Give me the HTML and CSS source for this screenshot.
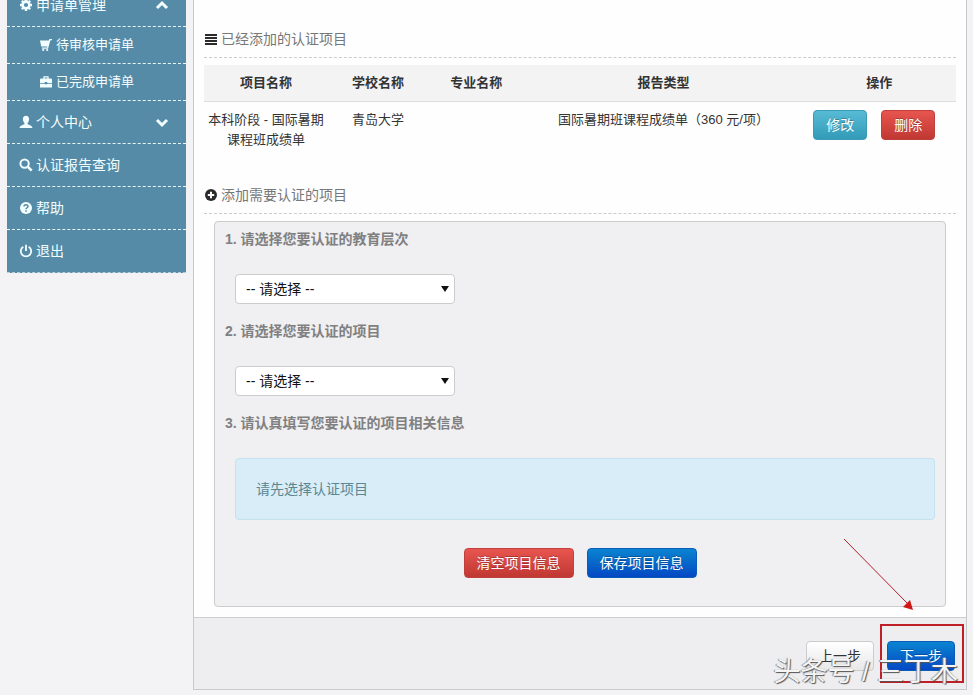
FILE: index.html
```html
<!DOCTYPE html>
<html lang="zh-CN">
<head>
    <meta charset="UTF-8">
    <title>认证申请</title>
    <link rel="stylesheet" href="styles.css">
</head>
<body>
    <nav class="sidebar">
        <a href="#" class="item">
            <svg class="icon" viewBox="0 0 14 14"><circle cx="7" cy="7" r="3.4" fill="none" stroke="currentColor" stroke-width="2.6"/><path d="M7 1v2M7 11v2M1 7h2M11 7h2M2.8 2.8l1.4 1.4M9.8 9.8l1.4 1.4M11.2 2.8L9.8 4.2M4.2 9.8l-1.4 1.4" stroke="currentColor" stroke-width="2.4"/></svg>
            <span>申请单管理</span>
            <svg class="arrow" viewBox="0 0 14 14"><path d="M2 10l5-5 5 5" fill="none" stroke="currentColor" stroke-width="3"/></svg>
        </a>
        <a href="#" class="item sub">
            <svg class="icon" viewBox="0 0 14 14"><path d="M13 1h-2.600l-.5 1.600H1L2.200 8.400h6.200l-.3 1H3v1.300h6L11.400 2.300H13z" fill="currentColor"/><circle cx="4.200" cy="12" r="1.100" fill="currentColor"/><circle cx="8.200" cy="12" r="1.100" fill="currentColor"/></svg>
            <span>待审核申请单</span>
        </a>
        <a href="#" class="item sub">
            <svg class="icon" viewBox="0 0 14 14"><path d="M5 4V1.800h4V4" fill="none" stroke="currentColor" stroke-width="1.300"/><path d="M2 3.500h10q1 0 1 1V8H8.300V7H5.700v1H1V4.500q0-1 1-1zM1 8.700h4.700v.6h2.600v-.6H13v3.800H1z" fill="currentColor"/></svg>
            <span>已完成申请单</span>
        </a>
        <a href="#" class="item">
            <svg class="icon" viewBox="0 0 14 14"><path d="M7 .8c2 0 3.100 1.300 3.100 3.200C10.100 5.800 9.400 7 8.600 7.900v1.300c1.800.900 4.600 1.200 4.900 3.800H.5c.3-2.600 3.100-2.900 4.900-3.800V7.900C4.600 7 3.900 5.800 3.900 4 3.900 2.100 5 .8 7 .8z" fill="currentColor"/></svg>
            <span>个人中心</span>
            <svg class="arrow" viewBox="0 0 14 14"><path d="M2 5l5 5 5-5" fill="none" stroke="currentColor" stroke-width="3"/></svg>
        </a>
        <a href="#" class="item">
            <svg class="icon" viewBox="0 0 14 14"><circle cx="5.600" cy="5.600" r="4.200" fill="none" stroke="currentColor" stroke-width="2"/><path d="M8.700 8.700l4 4" stroke="currentColor" stroke-width="2.600"/></svg>
            <span>认证报告查询</span>
        </a>
        <a href="#" class="item">
            <svg class="icon" viewBox="0 0 14 14"><circle cx="7" cy="7" r="6" fill="currentColor"/><path d="M5 5.500C5 3.200 9 3.200 9 5.400 9 6.800 7 6.700 7 8.300M7 9.300v1.500" fill="none" stroke="#558ba6" stroke-width="1.500"/></svg>
            <span>帮助</span>
        </a>
        <a href="#" class="item">
            <svg class="icon" viewBox="0 0 14 14"><path d="M4.300 2.800a5.200 5.200 0 1 0 5.400 0M7 .8V7" fill="none" stroke="currentColor" stroke-width="1.800"/></svg>
            <span>退出</span>
        </a>
    </nav>

    <main class="main">
        <div class="content">
            <h2 class="title">
                <svg class="icon" viewBox="0 0 14 14"><path d="M1 3h12M1 6h12M1 9h12M1 12h12" stroke="currentColor" stroke-width="2"/></svg>
                <span>已经添加的认证项目</span>
            </h2>
            <table class="projects">
                <thead>
                    <tr>
                        <th class="col-name">项目名称</th>
                        <th class="col-school">学校名称</th>
                        <th class="col-major">专业名称</th>
                        <th class="col-type">报告类型</th>
                        <th class="col-action">操作</th>
                    </tr>
                </thead>
                <tbody>
                    <tr>
                        <td>本科阶段 - 国际暑期课程班成绩单</td>
                        <td>青岛大学</td>
                        <td></td>
                        <td>国际暑期班课程成绩单（360 元/项）</td>
                        <td>
                            <div class="actions">
                                <button type="button" class="btn btn-info">修改</button>
                                <button type="button" class="btn btn-danger">删除</button>
                            </div>
                        </td>
                    </tr>
                </tbody>
            </table>

            <h2 class="title">
                <svg class="icon" viewBox="0 0 14 14"><circle cx="7" cy="7" r="6" fill="currentColor"/><path d="M7 3.800v6.400M3.800 7h6.400" stroke="#fff" stroke-width="2"/></svg>
                <span>添加需要认证的项目</span>
            </h2>
            <form class="panel">
                <label class="step" for="level">1. 请选择您要认证的教育层次</label>
                <div class="select">
                    <select id="level"><option>-- 请选择 --</option></select>
                </div>
                <label class="step" for="project">2. 请选择您要认证的项目</label>
                <div class="select">
                    <select id="project"><option>-- 请选择 --</option></select>
                </div>
                <h3 class="step">3. 请认真填写您要认证的项目相关信息</h3>
                <div class="alert">请先选择认证项目</div>
                <div class="form-buttons">
                    <button type="button" class="btn btn-danger">清空项目信息</button>
                    <button type="button" class="btn btn-primary">保存项目信息</button>
                </div>
            </form>
        </div>

        <div class="footer">
            <button type="button" class="btn">上一步</button>
            <button type="button" class="btn btn-primary">下一步</button>
            <svg class="pointer" viewBox="0 0 72 74"><path d="M1 1l64 65" stroke="#b5202a" stroke-width="1"/><path d="M70 72l-10-3 7-7z" fill="#d01818"/></svg>
            <div class="highlight"></div>
            <div class="watermark">头条号 / 三丁木</div>
        </div>
    </main>
</body>
</html>
```

FILE: styles.css
```css
* {
    margin: 0;
    padding: 0;
    box-sizing: border-box;
}
body {
    display: flex;
    align-items: flex-start;
    gap: 7px;
    padding: 0 6px 0 7px;
    background-color: #f3f2f5;
    color: #333333;
    font-family: "Liberation Sans", "Noto Sans CJK SC", sans-serif;
    font-size: 13px;
    line-height: 20px;
    overflow: hidden;
}
button, select {
    font-family: inherit;
    font-size: 14px;
}
.icon, .arrow {
    width: 14px;
    height: 14px;
    flex: none;
}

/* sidebar, scrolled partly out of view */
.sidebar {
    flex: none;
    width: 179px;
    margin-top: -16px;
    background-color: #558ba6;
}
.item {
    display: flex;
    align-items: center;
    gap: 3px;
    height: 43px;
    padding: 0 17px 0 12px;
    border-bottom: 1px dashed #e6f8fb;
    color: #f2fdff;
    font-size: 14px;
    text-decoration: none;
}
.item:last-child {
    border-bottom-color: #b9ced9;
}
.item.sub {
    height: 37px;
    padding-left: 32px;
    font-size: 13px;
}
.arrow {
    margin-left: auto;
}

.main {
    flex: 1;
    border: 1px solid #c9c9cb;
    border-top: none;
    background-color: #fefefe;
}
.content {
    padding: 29px 10px 10px;
}
.title {
    display: flex;
    align-items: center;
    gap: 3px;
    height: 29px;
    padding-bottom: 8px;
    margin-bottom: 7px;
    border-bottom: 1px dashed #cccccc;
    color: #777777;
    font-size: 14px;
    font-weight: normal;
}
.title .icon {
    color: #2b2b2b;
}

.projects {
    width: 100%;
    margin-bottom: 27px;
    table-layout: fixed;
    border-collapse: collapse;
    text-align: center;
}
.projects th {
    padding: 8px 4px;
    border-bottom: 1px solid #dddddd;
    background-color: #f3f3f3;
}
.projects td {
    padding: 8px 4px;
    vertical-align: top;
}
.col-name {
    width: 16.5%;
}
.col-school {
    width: 13.3%;
}
.col-major {
    width: 12.8%;
}
.col-type {
    width: 37%;
}
.actions {
    display: flex;
    justify-content: center;
    gap: 14px;
    padding-right: 10px;
}

.btn {
    height: 30px;
    padding: 0 12px;
    border: 1px solid #cccccc;
    border-radius: 4px;
    background-image: linear-gradient(#ffffff, #e8e8e8);
    color: #333333;
    line-height: 20px;
    white-space: nowrap;
    cursor: pointer;
}
.btn-info, .btn-danger, .btn-primary {
    color: #ffffff;
    text-shadow: 0 -1px 0 rgba(0, 0, 0, 0.25);
}
.btn-info {
    border-color: #3d9ab5;
    background-image: linear-gradient(#58bbd5, #329bb8);
}
.btn-danger {
    border-color: #c0403e;
    background-image: linear-gradient(#e8554f, #c03832);
}
.btn-primary {
    border-color: #0a5cb8;
    background-image: linear-gradient(#0a84d0, #0448c4);
}

.panel {
    margin: 0 10px;
    padding: 7px 10px 28px;
    border: 1px solid #cccccc;
    border-radius: 4px;
    background-color: #f0eff1;
}
.step {
    display: block;
    color: #808080;
    font-size: 14px;
    font-weight: bold;
    line-height: 20px;
}
.select {
    position: relative;
    width: 220px;
    margin: 25px 0 17px 10px;
}
.select::after {
    content: "";
    position: absolute;
    right: 6px;
    top: 12px;
    border: 4px solid transparent;
    border-top: 6px solid #111111;
    border-bottom: none;
    pointer-events: none;
}
select {
    display: block;
    width: 100%;
    height: 30px;
    padding: 0 10px;
    appearance: none;
    border: 1px solid #cccccc;
    border-radius: 4px;
    background-color: #ffffff;
    color: #111111;
}
.alert {
    margin: 25px 0 28px 10px;
    padding: 20px;
    border: 1px solid #c2e3ee;
    border-radius: 4px;
    background-color: #d8edf7;
    color: #5a8794;
    font-size: 14px;
}
.form-buttons {
    display: flex;
    justify-content: center;
    gap: 13px;
}

.footer {
    position: relative;
    display: flex;
    justify-content: flex-end;
    gap: 13px;
    padding: 23px 11px 18px;
    border-top: 1px solid #cccccc;
    background-color: #eeedef;
}
/* annotations drawn over the footer */
.pointer {
    position: absolute;
    right: 51px;
    top: -80px;
    width: 72px;
    height: 74px;
}
.highlight {
    position: absolute;
    right: 2px;
    top: 6px;
    width: 84px;
    height: 59px;
    border: 2px solid #bf1f26;
}
.watermark {
    position: absolute;
    right: 8px;
    top: 37px;
    color: #f5f5f5;
    font-size: 27px;
    line-height: 34px;
    text-shadow: 1px 1px 1px #555555, -1px 0 1px #888888;
    white-space: nowrap;
}
```
